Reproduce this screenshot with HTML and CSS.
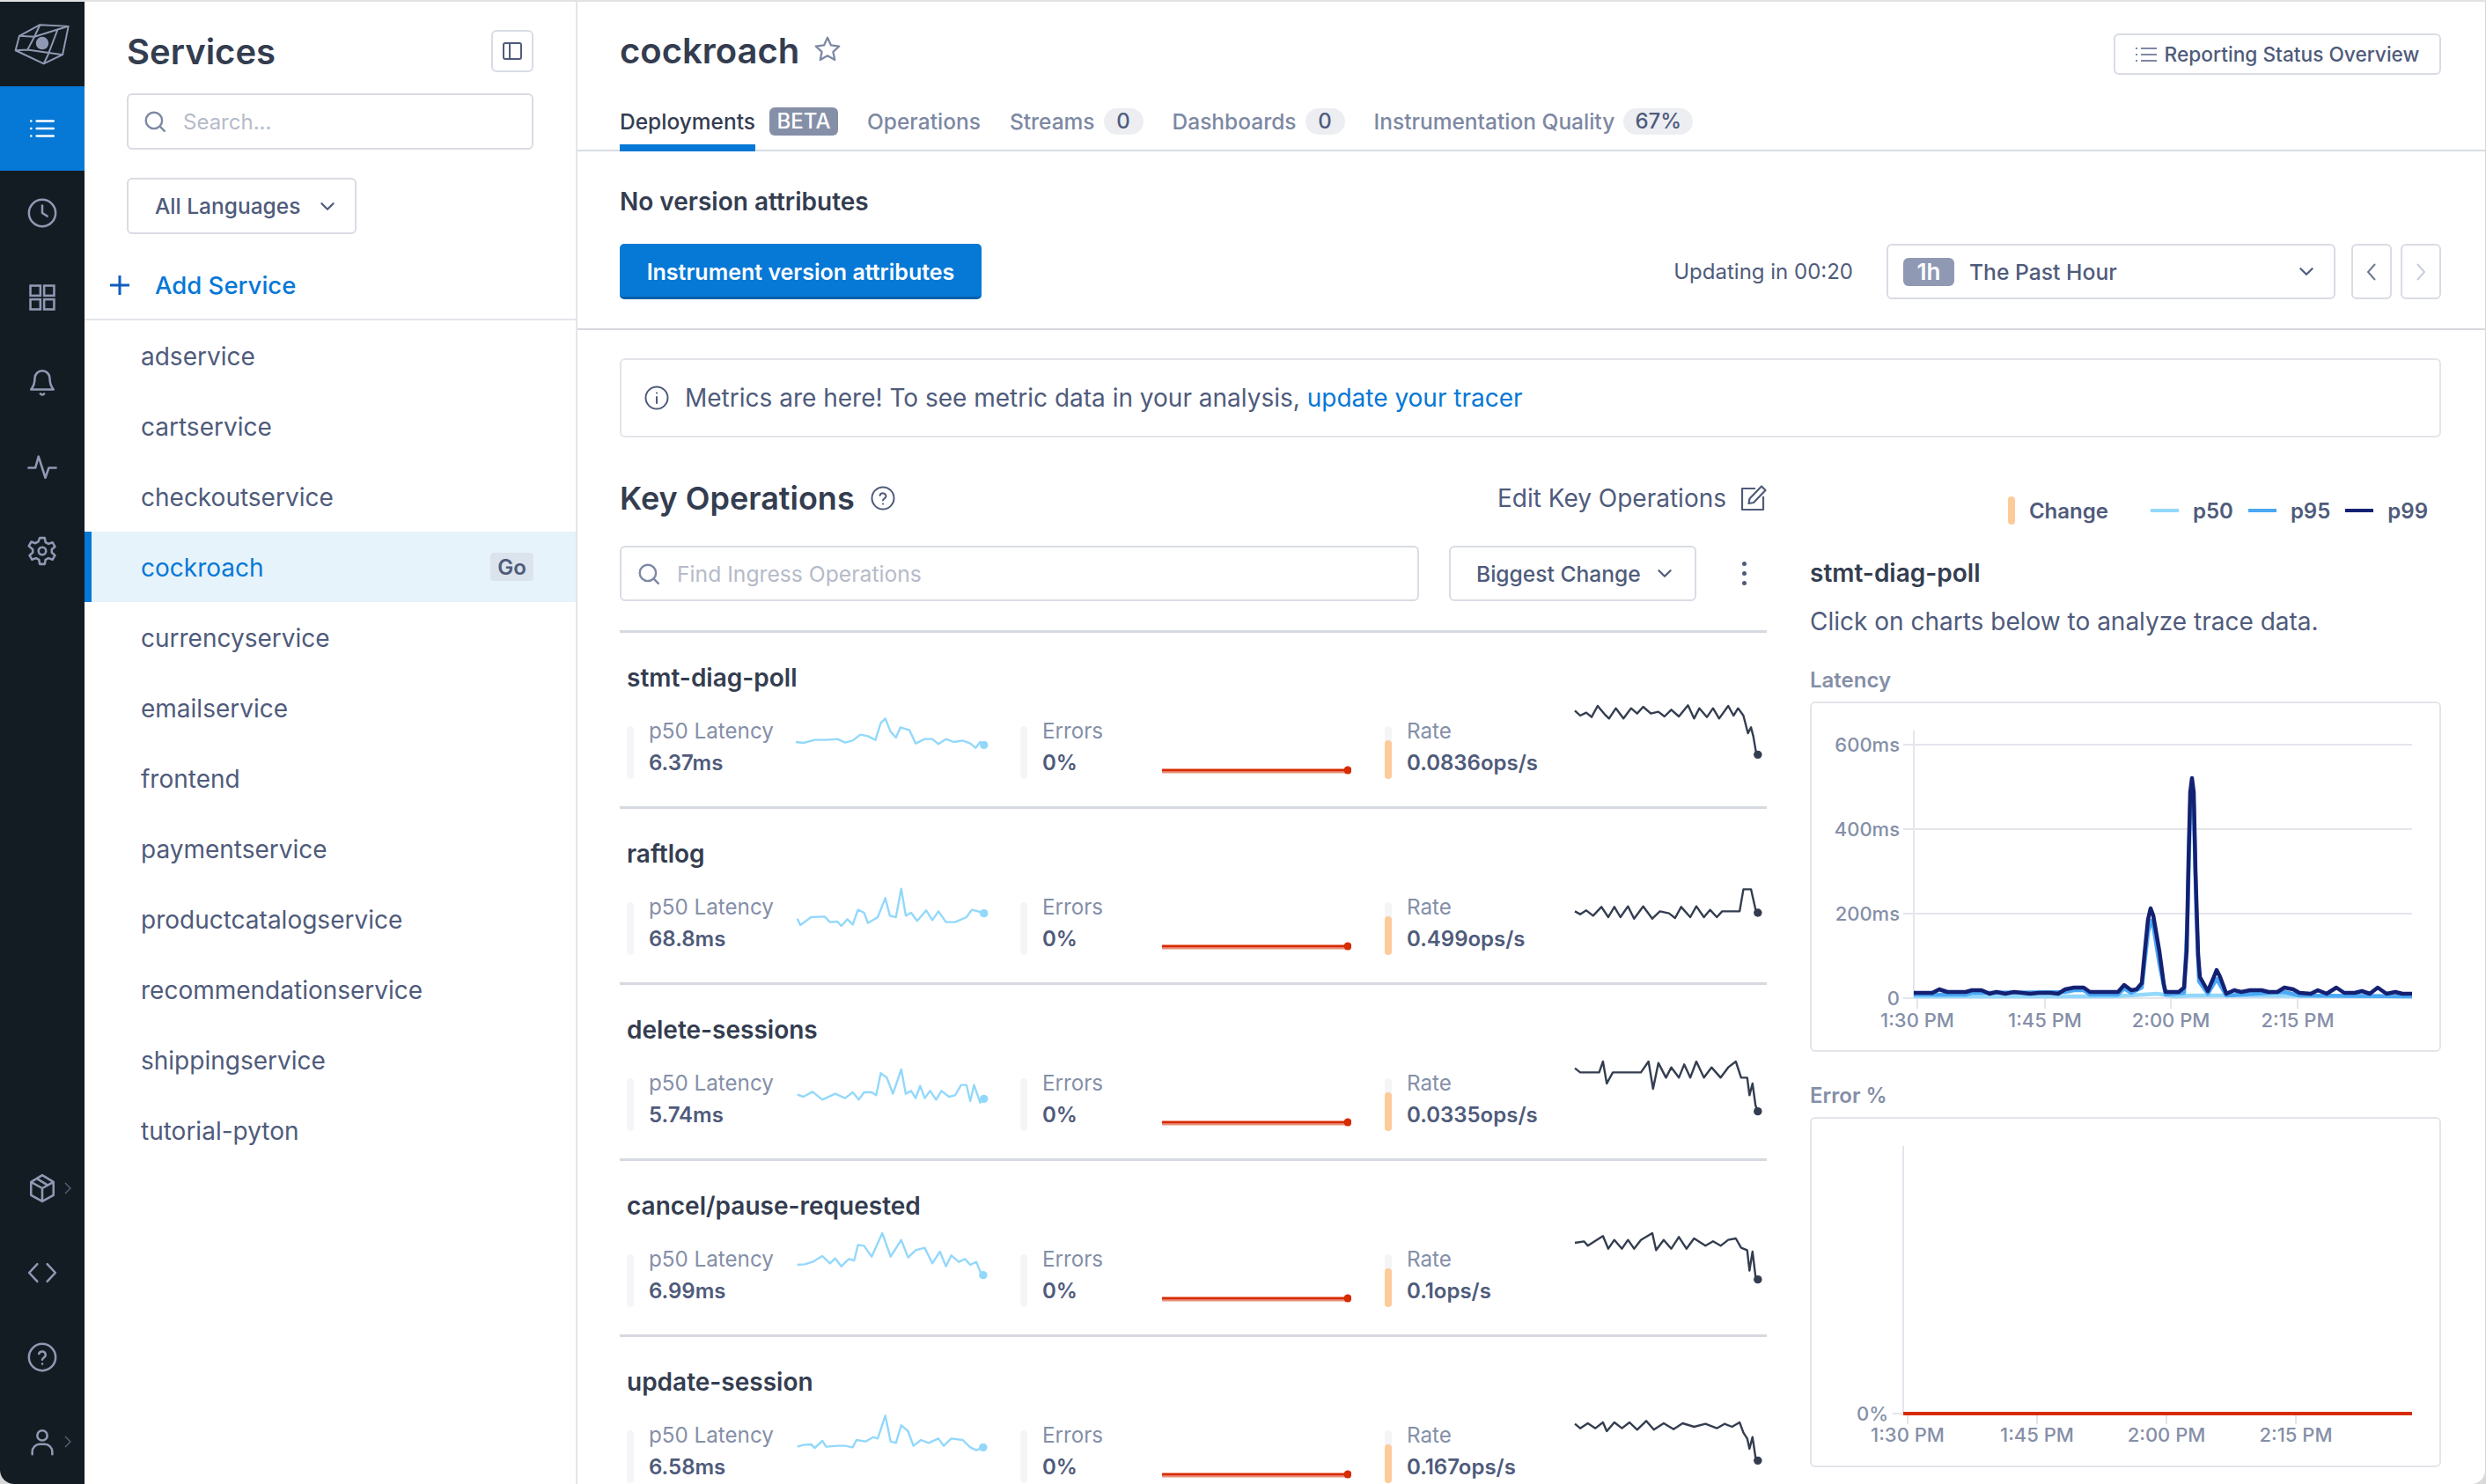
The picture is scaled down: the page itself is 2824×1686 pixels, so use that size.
FILE: index.html
```html
<!DOCTYPE html>
<html lang="en">
<head>
    <meta charset="UTF-8">
    <title>cockroach - Services</title>
    <link rel="stylesheet" href="styles.css">
</head>
<body>
<div class="app">
    <!-- icon rail -->
    <nav class="rail">
        <div class="rail-item">
            <svg class="logo" viewBox="45 75 200 150" fill="none" stroke="#8f99b3" stroke-width="6" stroke-linejoin="round"><path d="M53 172 66 122 137 84 235 89 215 187 150 218Z"/><path d="M66 122 118 125 198 100 235 89M137 84 118 125 94 170 53 172M94 170 215 187M198 100 165 187 150 218"/><circle cx="145" cy="147" r="22" fill="#8f99b3" stroke="none"/></svg>
        </div>
        <div class="rail-item active">
            <svg class="icon" viewBox="0 0 24 24" fill="none" stroke="#fff" stroke-width="1.8" stroke-linecap="round"><path d="M7.500 6H21M7.500 12H21M7.500 18H21M3 6h.1M3 12h.1M3 18h.1"/></svg>
        </div>
        <div class="rail-item">
            <svg class="icon" viewBox="0 0 24 24" fill="none" stroke="#8f99b3" stroke-width="1.8" stroke-linecap="round" stroke-linejoin="round"><circle cx="12" cy="12" r="10.700"/><path d="M12 6v6l4 2.500"/></svg>
        </div>
        <div class="rail-item">
            <svg class="icon" viewBox="0 0 24 24" fill="none" stroke="#8f99b3" stroke-width="1.8"><rect x="2.500" y="2.500" width="8" height="8"/><rect x="13.500" y="2.500" width="8" height="8"/><rect x="2.500" y="13.500" width="8" height="8"/><rect x="13.500" y="13.500" width="8" height="8"/></svg>
        </div>
        <div class="rail-item">
            <svg class="icon" viewBox="0 0 24 24" fill="none" stroke="#8f99b3" stroke-width="1.8" stroke-linecap="round" stroke-linejoin="round"><path d="M18 9A6 6 0 0 0 6 9c0 6.500-3 8.500-3 9h18c0-.5-3-2.500-3-9M10.500 21.500a2 2 0 0 0 3 0"/></svg>
        </div>
        <div class="rail-item">
            <svg class="icon" viewBox="0 0 24 24" fill="none" stroke="#8f99b3" stroke-width="1.8" stroke-linecap="round" stroke-linejoin="round"><path d="M1 13h5.500L9 4l5.500 17 2.800-8H23"/></svg>
        </div>
        <div class="rail-item">
            <svg class="icon" viewBox="0 0 24 24" fill="none" stroke="#8f99b3" stroke-width="1.8" stroke-linejoin="round"><circle cx="12" cy="12" r="3"/><path d="M10 1.500h4l.6 3.500 2.400 1.300 3.200-1.200 2 3.400-2.600 2.200v2.600l2.600 2.200-2 3.400-3.200-1.200-2.400 1.300-.6 3.500h-4l-.6-3.500-2.400-1.300-3.200 1.200-2-3.400 2.600-2.200v-2.600L1.200 8l2-3.400 3.200 1.200L8.800 4.500z"/></svg>
        </div>
        <div class="rail-item rail-spacer">
            <svg class="icon" viewBox="0 0 24 24" fill="none" stroke="#8f99b3" stroke-width="1.8" stroke-linejoin="round"><path d="M12 1.500 21 7v10.500l-9 5-9-5V7zM3 7l9 5 9-5M12 12v10.500M7.500 4.200l9 5.400"/></svg>
            <svg class="more" viewBox="0 0 8 14" fill="none" stroke="#5b6579" stroke-width="1.300"><path d="m1 1 6 6-6 6"/></svg>
        </div>
        <div class="rail-item">
            <svg class="icon" viewBox="0 0 24 24" fill="none" stroke="#8f99b3" stroke-width="1.8" stroke-linecap="round" stroke-linejoin="round"><path d="M8 5 1.500 12 8 19M16 5l6.500 7-6.500 7"/></svg>
        </div>
        <div class="rail-item">
            <svg class="icon" viewBox="0 0 24 24" fill="none" stroke="#8f99b3" stroke-width="1.8" stroke-linecap="round" stroke-linejoin="round"><circle cx="12" cy="12" r="10.700"/><path d="M9.300 9.200a2.800 2.800 0 0 1 5.400 1c0 1.800-2.700 2.300-2.700 3.800M12 17.300h.1"/></svg>
        </div>
        <div class="rail-item">
            <svg class="icon" viewBox="0 0 24 24" fill="none" stroke="#8f99b3" stroke-width="1.8" stroke-linecap="round"><circle cx="12" cy="7" r="4"/><path d="M4 22v-2a6 6 0 0 1 6-6h4a6 6 0 0 1 6 6v2"/></svg>
            <svg class="more" viewBox="0 0 8 14" fill="none" stroke="#5b6579" stroke-width="1.300"><path d="m1 1 6 6-6 6"/></svg>
        </div>
    </nav>

    <!-- services list -->
    <aside class="sidebar">
        <div class="side-head">
            <h2>Services</h2>
            <button class="square-btn">
                <svg width="24" height="24" viewBox="0 0 24 24" fill="none" stroke="#4f5b7b" stroke-width="2"><rect x="2" y="3" width="20" height="18" rx="2"/><path d="M9 3v18"/></svg>
            </button>
        </div>
        <div class="side-search">
            <svg class="search-icon" viewBox="0 0 24 24" fill="none" stroke="#7d88a3" stroke-width="2.200" stroke-linecap="round"><circle cx="11" cy="11" r="8.500"/><path d="m17.500 17.500 4.500 4.500"/></svg>
            <span>Search...</span>
        </div>
        <div class="lang-select">
            <span>All Languages</span>
            <svg class="chevron" viewBox="0 0 16 10" fill="none" stroke="#4f5b7b" stroke-width="2" stroke-linecap="round" stroke-linejoin="round"><path d="m2 2 6 6 6-6"/></svg>
        </div>
        <div class="add-service">
            <svg width="22" height="22" viewBox="0 0 22 22" fill="none" stroke="#0e5cc0" stroke-width="3"><path d="M11 0v22M0 11h22"/></svg>
            <span>Add Service</span>
        </div>
        <ul class="service-list">
            <li>adservice</li>
            <li>cartservice</li>
            <li>checkoutservice</li>
            <li class="selected">cockroach <span class="go">Go</span></li>
            <li>currencyservice</li>
            <li>emailservice</li>
            <li>frontend</li>
            <li>paymentservice</li>
            <li>productcatalogservice</li>
            <li>recommendationservice</li>
            <li>shippingservice</li>
            <li>tutorial-pyton</li>
        </ul>
    </aside>

    <main class="main">
        <header class="main-head">
            <div class="title-row">
                <h1>cockroach</h1>
                <svg class="star" viewBox="0 0 24 24" fill="none" stroke="#7d88a3" stroke-width="1.700" stroke-linejoin="round"><path d="m12 2 3 6.600 7 .8-5.200 4.800L18.200 21 12 17.500 5.800 21l1.400-6.800L2 9.400l7-.8z"/></svg>
                <button class="report-btn">
                    <svg width="24" height="24" viewBox="0 0 24 24" fill="none" stroke="#7d88a3" stroke-width="2"><path d="M6 5h18M6 12h18M6 19h18M0 5h2M0 12h2M0 19h2"/></svg>
                    Reporting Status Overview
                </button>
            </div>
            <div class="tabs">
                <div class="tab current"><span class="tab-label">Deployments</span><span class="beta">BETA</span></div>
                <div class="tab"><span class="tab-label">Operations</span></div>
                <div class="tab"><span class="tab-label">Streams</span><span class="pill">0</span></div>
                <div class="tab"><span class="tab-label">Dashboards</span><span class="pill">0</span></div>
                <div class="tab"><span class="tab-label">Instrumentation Quality</span><span class="pill wide">67%</span></div>
            </div>
        </header>

        <section class="version-band">
            <div class="version-title">No version attributes</div>
            <div class="version-row">
                <button class="primary-btn">Instrument version attributes</button>
                <span class="updating">Updating in 00:20</span>
                <div class="range-select">
                    <span class="range-badge">1h</span>
                    <span class="range-text">The Past Hour</span>
                    <svg class="chevron" viewBox="0 0 16 10" fill="none" stroke="#4f5b7b" stroke-width="2" stroke-linecap="round" stroke-linejoin="round"><path d="m2 2 6 6 6-6"/></svg>
                </div>
                <button class="page-btn"><svg width="12" height="22" viewBox="0 0 12 22" fill="none" stroke="#6d7895" stroke-width="2"><path d="M10 2 2 11l8 9"/></svg></button>
                <button class="page-btn next"><svg width="12" height="22" viewBox="0 0 12 22" fill="none" stroke="#c8cdd9" stroke-width="2"><path d="m2 2 8 9-8 9"/></svg></button>
            </div>
        </section>

        <div class="alert">
            <svg width="28" height="28" viewBox="0 0 28 28" fill="none" stroke="#4f5b7b" stroke-width="2" stroke-linecap="round"><circle cx="14" cy="14" r="12.500"/><path d="M14 13v7M14 8.500h.1"/></svg>
            <span>Metrics are here! To see metric data in your analysis, <a>update your tracer</a></span>
        </div>

        <div class="columns">
            <section class="ops">
                <div class="ops-head">
                    <h3>Key Operations</h3>
                    <svg width="28" height="28" viewBox="0 0 28 28" fill="none" stroke="#4f5b7b" stroke-width="2" stroke-linecap="round"><circle cx="14" cy="14" r="12.500"/><path d="M10.500 10.800a3.600 3.600 0 0 1 7 1c0 2.300-3.500 2.700-3.500 4.700M14 20.500h.1"/></svg>
                    <span class="edit-link">Edit Key Operations</span>
                    <svg width="30" height="30" viewBox="0 0 30 30" fill="none" stroke="#4f5b7b" stroke-width="2.200" stroke-linejoin="round"><path d="M17 4H2v24h24V13"/><path d="M24 1.500 28.500 6 15 20l-5.500 1 1-5.500z"/></svg>
                </div>
                <div class="ops-tools">
                    <div class="ops-search">
                        <svg class="search-icon" viewBox="0 0 24 24" fill="none" stroke="#7d88a3" stroke-width="2.200" stroke-linecap="round"><circle cx="11" cy="11" r="8.500"/><path d="m17.500 17.500 4.500 4.500"/></svg>
                        <span>Find Ingress Operations</span>
                    </div>
                    <div class="sort-select">
                        <span>Biggest Change</span>
                        <svg class="chevron" viewBox="0 0 16 10" fill="none" stroke="#4f5b7b" stroke-width="2" stroke-linecap="round" stroke-linejoin="round"><path d="m2 2 6 6 6-6"/></svg>
                    </div>
                    <div class="kebab"><i></i><i></i><i></i></div>
                </div>

                <article class="op-row">
                    <div class="op-name">stmt-diag-poll</div>
                    <div class="metrics">
                        <div class="metric latency">
                            <div class="bar"></div>
                            <div class="metric-text"><div class="label">p50 Latency</div><div class="value">6.37ms</div></div>
                            <svg class="spark spark-lat" viewBox="260 911 253 180" preserveAspectRatio="none"><polyline points="260,965 270,968 285,958 300,958 315,955 325,967 335,960 345,940 355,945 365,958 372,900 378,885 385,930 392,950 398,915 410,925 418,970 430,955 440,955 448,972 458,955 468,965 480,960 490,970 497,985 503,965 508,975"/><ellipse cx="508" cy="975" rx="5.500" ry="14"/></svg>
                        </div>
                        <div class="metric errors">
                            <div class="bar"></div>
                            <div class="metric-text"><div class="label">Errors</div><div class="value">0%</div></div>
                            <svg class="spark-err" viewBox="0 0 215 60"><path class="under" d="M0 52.500h208"/><path class="line" d="M0 50h211"/><circle cx="211" cy="50" r="4.500"/></svg>
                        </div>
                        <div class="metric rate">
                            <div class="bar"><div class="bar-change"></div></div>
                            <div class="metric-text"><div class="label">Rate</div><div class="value">0.0836ops/s</div></div>
                            <svg class="spark spark-rate" viewBox="1288 911 247 180" preserveAspectRatio="none"><polyline points="1288,858 1295,875 1303,865 1310,880 1318,842 1327,870 1333,885 1342,850 1352,885 1362,850 1370,868 1378,845 1388,868 1398,862 1406,878 1415,855 1425,878 1437,840 1445,885 1452,850 1462,880 1470,850 1478,885 1490,842 1497,875 1503,850 1510,875 1516,935 1520,915 1523,945 1527,1005"/><ellipse cx="1529" cy="1008" rx="5.500" ry="14"/></svg>
                        </div>
                    </div>
                </article>

                <article class="op-row">
                    <div class="op-name">raftlog</div>
                    <div class="metrics">
                        <div class="metric latency">
                            <div class="bar"></div>
                            <div class="metric-text"><div class="label">p50 Latency</div><div class="value">68.8ms</div></div>
                            <svg class="spark spark-lat" viewBox="260 284 253 180" preserveAspectRatio="none"><polyline points="262,340 266,362 275,345 280,335 298,333 305,352 315,350 320,365 328,342 335,360 342,310 350,320 355,355 368,335 378,270 384,330 392,335 399,238 405,330 412,320 420,348 432,312 440,345 448,315 458,352 470,352 485,335 492,310 500,315 508,322"/><ellipse cx="508" cy="322" rx="5.500" ry="14"/></svg>
                        </div>
                        <div class="metric errors">
                            <div class="bar"></div>
                            <div class="metric-text"><div class="label">Errors</div><div class="value">0%</div></div>
                            <svg class="spark-err" viewBox="0 0 215 60"><path class="under" d="M0 52.500h208"/><path class="line" d="M0 50h211"/><circle cx="211" cy="50" r="4.500"/></svg>
                        </div>
                        <div class="metric rate">
                            <div class="bar"><div class="bar-change"></div></div>
                            <div class="metric-text"><div class="label">Rate</div><div class="value">0.499ops/s</div></div>
                            <svg class="spark spark-rate" viewBox="1288 284 247 180" preserveAspectRatio="none"><polyline points="1288,315 1295,325 1303,312 1312,330 1323,300 1332,335 1340,300 1348,335 1358,298 1366,340 1378,298 1390,340 1400,315 1412,322 1420,338 1428,300 1440,335 1448,298 1458,335 1466,310 1475,335 1482,315 1505,315 1510,240 1520,240 1527,320"/><ellipse cx="1529" cy="320" rx="5.500" ry="14"/></svg>
                        </div>
                    </div>
                </article>

                <article class="op-row">
                    <div class="op-name">delete-sessions</div>
                    <div class="metrics">
                        <div class="metric latency">
                            <div class="bar"></div>
                            <div class="metric-text"><div class="label">p50 Latency</div><div class="value">5.74ms</div></div>
                            <svg class="spark spark-lat" viewBox="260 882 253 180" preserveAspectRatio="none"><polyline points="262,938 270,945 282,928 295,955 312,935 325,950 335,930 343,955 350,930 360,930 366,940 372,865 380,880 388,935 399,852 405,935 412,925 418,950 424,908 430,950 437,925 445,955 452,925 462,945 470,940 478,905 485,905 490,960 495,905 503,965 508,952"/><ellipse cx="508" cy="952" rx="5.500" ry="14"/></svg>
                        </div>
                        <div class="metric errors">
                            <div class="bar"></div>
                            <div class="metric-text"><div class="label">Errors</div><div class="value">0%</div></div>
                            <svg class="spark-err" viewBox="0 0 215 60"><path class="under" d="M0 52.500h208"/><path class="line" d="M0 50h211"/><circle cx="211" cy="50" r="4.500"/></svg>
                        </div>
                        <div class="metric rate">
                            <div class="bar"><div class="bar-change"></div></div>
                            <div class="metric-text"><div class="label">Rate</div><div class="value">0.0335ops/s</div></div>
                            <svg class="spark spark-rate" viewBox="1288 882 247 180" preserveAspectRatio="none"><polyline points="1288,848 1295,862 1320,862 1325,825 1330,900 1338,862 1375,862 1385,825 1391,918 1398,830 1408,880 1415,845 1425,880 1432,835 1440,880 1448,825 1458,880 1468,845 1480,880 1490,845 1500,825 1507,880 1515,880 1518,940 1522,900 1526,975 1529,995"/><ellipse cx="1529" cy="995" rx="5.500" ry="14"/></svg>
                        </div>
                    </div>
                </article>

                <article class="op-row">
                    <div class="op-name">cancel/pause-requested</div>
                    <div class="metrics">
                        <div class="metric latency">
                            <div class="bar"></div>
                            <div class="metric-text"><div class="label">p50 Latency</div><div class="value">6.99ms</div></div>
                            <svg class="spark spark-lat" viewBox="260 254 253 180" preserveAspectRatio="none"><polyline points="262,290 272,288 282,280 295,260 305,285 312,268 320,295 330,270 337,275 342,222 350,225 360,262 374,182 385,262 399,205 408,265 418,240 430,232 440,285 450,245 458,295 465,258 475,280 483,270 490,290 498,280 505,325"/><ellipse cx="507" cy="325" rx="5.500" ry="14"/></svg>
                        </div>
                        <div class="metric errors">
                            <div class="bar"></div>
                            <div class="metric-text"><div class="label">Errors</div><div class="value">0%</div></div>
                            <svg class="spark-err" viewBox="0 0 215 60"><path class="under" d="M0 52.500h208"/><path class="line" d="M0 50h211"/><circle cx="211" cy="50" r="4.500"/></svg>
                        </div>
                        <div class="metric rate">
                            <div class="bar"><div class="bar-change"></div></div>
                            <div class="metric-text"><div class="label">Rate</div><div class="value">0.1ops/s</div></div>
                            <svg class="spark spark-rate" viewBox="1288 254 247 180" preserveAspectRatio="none"><polyline points="1288,215 1300,210 1305,225 1325,192 1332,235 1340,205 1350,235 1358,205 1366,235 1375,205 1390,182 1395,240 1405,205 1415,235 1425,195 1435,235 1445,200 1460,225 1470,210 1480,225 1490,205 1500,200 1507,232 1515,240 1518,310 1522,245 1526,330 1529,340"/><ellipse cx="1529" cy="340" rx="5.500" ry="14"/></svg>
                        </div>
                    </div>
                </article>

                <article class="op-row">
                    <div class="op-name">update-session</div>
                    <div class="metrics">
                        <div class="metric latency">
                            <div class="bar"></div>
                            <div class="metric-text"><div class="label">p50 Latency</div><div class="value">6.58ms</div></div>
                            <svg class="spark spark-lat" viewBox="260 852 253 180" preserveAspectRatio="none"><polyline points="262,908 270,902 280,900 285,912 295,888 300,908 315,905 325,905 335,910 340,885 352,890 362,875 368,880 378,802 385,890 392,895 399,835 408,855 415,905 425,885 435,895 448,880 455,905 465,880 480,885 490,910 498,920 507,910"/><ellipse cx="507" cy="910" rx="5.500" ry="14"/></svg>
                        </div>
                        <div class="metric errors">
                            <div class="bar"></div>
                            <div class="metric-text"><div class="label">Errors</div><div class="value">0%</div></div>
                            <svg class="spark-err" viewBox="0 0 215 60"><path class="under" d="M0 52.500h208"/><path class="line" d="M0 50h211"/><circle cx="211" cy="50" r="4.500"/></svg>
                        </div>
                        <div class="metric rate">
                            <div class="bar"><div class="bar-change"></div></div>
                            <div class="metric-text"><div class="label">Rate</div><div class="value">0.167ops/s</div></div>
                            <svg class="spark spark-rate" viewBox="1288 852 247 180" preserveAspectRatio="none"><polyline points="1288,830 1295,845 1305,828 1315,845 1325,825 1330,855 1340,825 1350,845 1360,825 1370,850 1382,820 1392,850 1405,828 1418,848 1430,828 1445,840 1460,830 1475,845 1485,830 1495,840 1505,825 1510,860 1515,880 1518,915 1522,875 1526,945 1529,955"/><ellipse cx="1529" cy="955" rx="5.500" ry="14"/></svg>
                        </div>
                    </div>
                </article>
            </section>

            <section class="detail">
                <div class="legend">
                    <span class="legend-change"></span><span class="legend-text change-text">Change</span>
                    <span class="legend-line p50"></span><span class="legend-text">p50</span>
                    <span class="legend-line p95"></span><span class="legend-text">p95</span>
                    <span class="legend-line p99"></span><span class="legend-text">p99</span>
                </div>
                <div class="detail-name">stmt-diag-poll</div>
                <div class="detail-hint">Click on charts below to analyze trace data.</div>

                <div class="chart-title">Latency</div>
                <div class="chart-box">
                    <svg class="chart" viewBox="2058 799 713 394">
                        <g class="grid">
                            <path d="M2162 846H2740M2162 942H2740M2162 1038H2740M2162 1134H2740"/>
                            <path d="M2174 830V1134M2178 1134v12M2323 1134v12M2466 1134v12M2610 1134v12"/>
                        </g>
                        <g class="axis">
                            <text x="2158" y="854" text-anchor="end">600ms</text>
                            <text x="2158" y="950" text-anchor="end">400ms</text>
                            <text x="2158" y="1046" text-anchor="end">200ms</text>
                            <text x="2158" y="1142" text-anchor="end">0</text>
                            <text x="2178" y="1167" text-anchor="middle">1:30 PM</text>
                            <text x="2323" y="1167" text-anchor="middle">1:45 PM</text>
                            <text x="2466" y="1167" text-anchor="middle">2:00 PM</text>
                            <text x="2610" y="1167" text-anchor="middle">2:15 PM</text>
                        </g>
                        <polyline class="l50" points="2174,1132 2300,1132 2400,1132 2435,1130 2450,1129 2470,1132 2490,1131 2530,1131 2740,1132"/>
                        <polyline class="l95" points="2174,1130 2233,1130 2240,1128 2251,1128 2346,1127 2356,1125 2367,1125 2374,1130 2406,1130 2413,1123 2421,1128 2433,1122 2440,1060 2443,1046 2446,1052 2453,1095 2460,1130 2481,1128 2485,1040 2488,915 2490,900 2492,915 2495,1040 2498,1115 2508,1129 2518,1112 2529,1131 2595,1127 2612,1131 2740,1132"/>
                        <polyline class="l99" points="2174,1128 2195,1128 2203,1124 2212,1127 2233,1127 2240,1125 2251,1125 2260,1129 2268,1127 2278,1129 2288,1127 2306,1129 2316,1128 2329,1128 2338,1129 2346,1124 2356,1122 2367,1122 2374,1127 2406,1127 2413,1119 2421,1125 2427,1124 2433,1117 2436,1085 2440,1045 2443,1032 2446,1040 2453,1081 2458,1118 2460,1127 2475,1127 2481,1122 2484,1080 2486,980 2488,900 2490,884 2492,900 2494,990 2497,1085 2499,1110 2508,1126 2514,1112 2518,1102 2522,1110 2529,1129 2538,1125 2546,1127 2556,1125 2569,1125 2577,1127 2587,1127 2595,1122 2605,1124 2612,1128 2625,1129 2633,1125 2643,1129 2654,1122 2663,1128 2675,1128 2683,1126 2692,1129 2701,1122 2711,1129 2721,1127 2729,1129 2740,1129"/>
                    </svg>
                </div>

                <div class="chart-title second">Error %</div>
                <div class="chart-box">
                    <svg class="chart" viewBox="2058 1271 713 394">
                        <g class="grid">
                            <path d="M2162 1302V1606M2150 1606H2162M2167 1606v12M2314 1606v12M2461 1606v12M2608 1606v12"/>
                        </g>
                        <g class="axis">
                            <text x="2145" y="1614" text-anchor="end">0%</text>
                            <text x="2167" y="1638" text-anchor="middle">1:30 PM</text>
                            <text x="2314" y="1638" text-anchor="middle">1:45 PM</text>
                            <text x="2461" y="1638" text-anchor="middle">2:00 PM</text>
                            <text x="2608" y="1638" text-anchor="middle">2:15 PM</text>
                        </g>
                        <path class="err-line" d="M2162 1606H2740"/>
                    </svg>
                </div>
            </section>
        </div>
    </main>
</div>
</body>
</html>
```

FILE: styles.css
```css
:root {
    --dark: #343d50;
    --mid: #4f5b7b;
    --muted: #858fa8;
    --placeholder: #b5bbc9;
    --border: #d9dce4;
    --blue: #0678d6;
    --rail: #141c23;
}

html, body {
    margin: 0;
    padding: 0;
    height: 1686px;
    overflow: hidden;
    background: #d9d9d9;
    font-family: 'Inter', 'Liberation Sans', sans-serif;
    color: var(--mid);
}
.app {
    display: flex;
    box-sizing: border-box;
    height: 1686px;
    border-top: 2px solid #e2e2e2;
    border-right: 1px solid #d5d7dc;
    border-radius: 0 0 16px 16px;
    overflow: hidden;
    background: #fff;
}
button {
    font-family: inherit;
    cursor: pointer;
}

/* icon rail */
.rail {
    width: 96px;
    flex: none;
    display: flex;
    flex-direction: column;
    background: var(--rail);
}
.rail-item {
    height: 96px;
    flex: none;
    display: flex;
    align-items: center;
    justify-content: center;
    position: relative;
}
.rail-item.active {
    background: var(--blue);
}
.rail-spacer {
    margin-top: auto;
}
.logo {
    width: 66px;
    height: 50px;
}
.icon {
    width: 34px;
    height: 34px;
}
.more {
    position: absolute;
    left: 73px;
    top: 41px;
    width: 8px;
    height: 14px;
}

/* services list */
.sidebar {
    width: 560px;
    flex: none;
    box-sizing: border-box;
    border-right: 2px solid #e3e5ea;
    display: flex;
    flex-direction: column;
}
.side-head {
    display: flex;
    align-items: center;
    justify-content: space-between;
    height: 48px;
    padding: 32px 48px 0 48px;
}
.side-head h2 {
    margin: 0;
    font-size: 40px;
    font-weight: 600;
    color: var(--dark);
}
.square-btn {
    width: 48px;
    height: 48px;
    padding: 0;
    display: flex;
    align-items: center;
    justify-content: center;
    background: #fff;
    border: 2px solid var(--border);
    border-radius: 6px;
}
.side-search {
    margin: 24px 48px 0 48px;
    height: 64px;
    box-sizing: border-box;
    border: 2px solid var(--border);
    border-radius: 6px;
    display: flex;
    align-items: center;
    padding-left: 17px;
    font-size: 24px;
    color: var(--placeholder);
}
.search-icon {
    width: 26px;
    height: 26px;
    margin-right: 19px;
    flex: none;
}
.lang-select {
    margin: 32px 0 0 48px;
    width: 261px;
    height: 64px;
    box-sizing: border-box;
    border: 2px solid var(--border);
    border-radius: 6px;
    display: flex;
    align-items: center;
    padding-left: 30px;
    font-size: 24.5px;
    font-weight: 500;
}
.lang-select .chevron {
    margin-left: 22px;
}
.chevron {
    width: 18px;
    height: 11px;
    flex: none;
}
.add-service {
    height: 98px;
    box-sizing: border-box;
    padding: 19px 0 0 29px;
    border-bottom: 2px solid #e3e5ea;
    display: flex;
    align-items: center;
    font-size: 27.5px;
    font-weight: 500;
    color: var(--blue);
}
.add-service span {
    margin-left: 29px;
}
.service-list {
    list-style: none;
    margin: 0;
    padding: 0;
}
.service-list li {
    height: 80px;
    box-sizing: border-box;
    padding: 2px 48px 0 64px;
    display: flex;
    align-items: center;
    justify-content: space-between;
    font-size: 28px;
}
.service-list li.selected {
    background: #e6f3fa;
    color: var(--blue);
    border-left: 8px solid var(--blue);
    padding-left: 56px;
}
.go {
    width: 49px;
    height: 32px;
    margin-top: -2px;
    border-radius: 4px;
    background: #dbe3ec;
    color: var(--mid);
    font-size: 24px;
    font-weight: 600;
    display: flex;
    align-items: center;
    justify-content: center;
}

/* main panel */
.main {
    flex: 1;
    min-width: 0;
}
.main-head {
    box-sizing: border-box;
    height: 170px;
    border-bottom: 2px solid var(--border);
    padding: 0 50px 0 48px;
}
.title-row {
    height: 112px;
    display: flex;
    box-sizing: border-box;
    padding-top: 32px;
}
.title-row h1 {
    margin: 0;
    font-size: 40px;
    line-height: 48px;
    font-weight: 600;
    color: var(--dark);
}
.star {
    width: 32px;
    height: 32px;
    margin: 6px 0 0 16px;
}
.report-btn {
    margin: 4px 0 0 auto;
    width: 372px;
    height: 47px;
    box-sizing: border-box;
    background: #fff;
    border: 2px solid var(--border);
    border-radius: 6px;
    display: flex;
    align-items: center;
    justify-content: center;
    gap: 9px;
    font-size: 22.7px;
    font-weight: 500;
    color: var(--mid);
}
.tabs {
    display: flex;
    gap: 33px;
    height: 56px;
    box-sizing: border-box;
    padding-bottom: 8px;
}
.tab {
    display: flex;
    align-items: center;
    gap: 10px;
    font-size: 24.5px;
    line-height: 30px;
    font-weight: 500;
    color: #7d88a3;
}
.tab.current {
    color: var(--dark);
    gap: 16px;
}
.tab-label {
    position: relative;
}
.tab.current .tab-label::after {
    content: '';
    position: absolute;
    left: 0;
    right: 0;
    bottom: -19px;
    height: 8px;
    background: var(--blue);
}
.beta {
    width: 78px;
    height: 32px;
    border-radius: 6px;
    background: #858fa8;
    color: #fff;
    font-size: 24px;
    font-weight: 500;
    display: flex;
    align-items: center;
    justify-content: center;
}
.pill {
    width: 45px;
    height: 30px;
    border-radius: 15px;
    background: #eceef2;
    color: var(--mid);
    font-size: 24px;
    display: flex;
    align-items: center;
    justify-content: center;
}
.pill.wide {
    width: 79px;
}

.version-band {
    box-sizing: border-box;
    height: 203px;
    border-bottom: 2px solid #d6d9de;
    padding: 40px 50px 0 48px;
}
.version-title {
    font-size: 28px;
    line-height: 34px;
    font-weight: 600;
    color: var(--dark);
}
.version-row {
    display: flex;
    align-items: center;
    margin-top: 31px;
    height: 63px;
}
.primary-btn {
    width: 411px;
    height: 63px;
    padding: 3px 0 0;
    background: var(--blue);
    border: none;
    border-bottom: 3px solid #055fab;
    border-radius: 5px;
    color: #fff;
    font-size: 25px;
    font-weight: 600;
}
.updating {
    margin-left: auto;
    font-size: 24px;
    color: var(--mid);
}
.range-select {
    width: 510px;
    height: 63px;
    margin-left: 38px;
    box-sizing: border-box;
    border: 2px solid var(--border);
    border-radius: 6px;
    display: flex;
    align-items: center;
    padding: 0 22px 0 17px;
}
.range-badge {
    width: 58px;
    height: 32px;
    border-radius: 6px;
    background: #8f99b3;
    color: #fff;
    font-size: 26px;
    font-weight: 600;
    display: flex;
    align-items: center;
    justify-content: center;
}
.range-text {
    margin-left: 17px;
    font-size: 24.7px;
    font-weight: 500;
    flex: 1;
}
.page-btn {
    width: 46px;
    height: 63px;
    margin-left: 18px;
    padding: 0;
    background: #fff;
    border: 2px solid var(--border);
    border-radius: 6px;
    display: flex;
    align-items: center;
    justify-content: center;
}
.page-btn.next {
    margin-left: 10px;
}

.alert {
    margin: 32px 50px 0 48px;
    height: 90px;
    box-sizing: border-box;
    border: 2px solid #e3e5ea;
    border-radius: 6px;
    display: flex;
    align-items: center;
    gap: 18px;
    padding-left: 26px;
    font-size: 28px;
}
.alert a {
    color: var(--blue);
}

.columns {
    display: flex;
    gap: 49px;
    padding: 0 50px 0 48px;
}

/* key operations */
.ops {
    width: 1303px;
    flex: none;
}
.ops-head {
    height: 80px;
    margin-top: 29px;
    display: flex;
    align-items: center;
}
.ops-head h3 {
    margin: 0 18px 0 0;
    font-size: 36px;
    font-weight: 600;
    color: var(--dark);
}
.edit-link {
    margin: 0 16px 0 auto;
    font-size: 28px;
}
.ops-tools {
    display: flex;
    margin-top: 14px;
    height: 63px;
    margin-bottom: 33px;
}
.ops-search {
    width: 908px;
    box-sizing: border-box;
    border: 2px solid var(--border);
    border-radius: 6px;
    display: flex;
    align-items: center;
    padding-left: 18px;
    font-size: 24.7px;
    color: var(--placeholder);
}
.sort-select {
    width: 281px;
    margin-left: 34px;
    box-sizing: border-box;
    border: 2px solid var(--border);
    border-radius: 6px;
    display: flex;
    align-items: center;
    padding-left: 29px;
    gap: 18px;
    font-size: 24.6px;
    font-weight: 500;
}
.kebab {
    display: flex;
    flex-direction: column;
    justify-content: center;
    gap: 6px;
    margin-left: 52px;
}
.kebab i {
    display: block;
    width: 5px;
    height: 5px;
    border-radius: 50%;
    background: var(--mid);
}
.op-row {
    height: 200px;
    box-sizing: border-box;
    border-top: 3px solid #d6d9e0;
    padding: 34px 0 0 8px;
}
.op-name {
    font-size: 28px;
    line-height: 34px;
    font-weight: 600;
    color: var(--dark);
}
.metrics {
    display: flex;
    margin-top: 38px;
}
.metric {
    display: flex;
    height: 60px;
    flex: none;
    position: relative;
}
.metric.latency {
    width: 447px;
}
.metric.errors {
    width: 414px;
}
.metric.rate {
    width: 434px;
}
.bar {
    width: 8px;
    height: 60px;
    flex: none;
    border-radius: 4px;
    background: #f4f5f7;
    display: flex;
    align-items: flex-end;
}
.bar-change {
    width: 8px;
    height: 44px;
    border-radius: 4px;
    background: #fdcb9a;
}
.metric-text {
    margin: -12px 0 0 17px;
}
.label {
    font-size: 24.2px;
    line-height: 36px;
    color: var(--muted);
}
.value {
    font-size: 24px;
    line-height: 36px;
    font-weight: 600;
    color: var(--mid);
}
.spark {
    height: 60px;
    overflow: visible;
    margin-left: auto;
    flex: none;
}
.spark polyline {
    fill: none;
    stroke-width: 2.4;
    stroke-linejoin: round;
    vector-effect: non-scaling-stroke;
}
.spark-lat {
    width: 218px;
    margin-right: 37px;
}
.spark-lat polyline {
    stroke: #93d8fb;
}
.spark-lat ellipse {
    fill: #93d8fb;
}
.spark-rate {
    width: 213px;
    margin-right: 5px;
}
.spark-rate polyline {
    stroke: var(--dark);
}
.spark-rate ellipse {
    fill: var(--dark);
}
.spark-err {
    width: 215px;
    height: 60px;
    margin-left: auto;
    margin-right: 38px;
    flex: none;
}
.spark-err .line {
    stroke: #d72b00;
    stroke-width: 3;
}
.spark-err .under {
    stroke: #e8907a;
    stroke-width: 2;
}
.spark-err circle {
    fill: #d72b00;
}

/* right hand detail */
.detail {
    width: 717px;
    flex: none;
}
.legend {
    display: flex;
    align-items: center;
    justify-content: flex-end;
    height: 32px;
    margin-top: 67px;
    padding-right: 15px;
}
.legend-change {
    width: 8px;
    height: 32px;
    border-radius: 4px;
    background: #fdcb9a;
    margin-right: 16px;
}
.legend-text {
    font-size: 24px;
    font-weight: 600;
    margin-left: 16px;
    margin-right: 17px;
}
.legend-text:last-child {
    margin-right: 0;
}
.legend-change + .legend-text {
    margin-left: 0;
    margin-right: 48px;
}
.legend-line {
    width: 32px;
    height: 4px;
}
.legend-line.p50 {
    background: #93d8fb;
}
.legend-line.p95 {
    background: #4aa8f5;
}
.legend-line.p99 {
    background: #142172;
}
.detail-name {
    margin-top: 38px;
    font-size: 28px;
    line-height: 34px;
    font-weight: 600;
    color: var(--dark);
}
.detail-hint {
    margin-top: 21px;
    font-size: 28px;
    line-height: 34px;
}
.chart-title {
    margin-top: 33px;
    font-size: 24px;
    line-height: 34px;
    font-weight: 600;
    color: var(--muted);
}
.chart-title.second {
    margin-top: 32px;
    line-height: 35px;
}
.chart-box {
    margin-top: 7px;
    height: 398px;
    box-sizing: border-box;
    border: 2px solid #e3e5ea;
    border-radius: 6px;
}
.chart {
    display: block;
    width: 713px;
    height: 394px;
}
.grid path {
    fill: none;
    stroke: #e4e6ec;
    stroke-width: 2;
}
.axis text {
    font-size: 22px;
    font-weight: 500;
    fill: var(--muted);
}
.chart polyline {
    fill: none;
    stroke-width: 4.5;
    stroke-linejoin: round;
}
.l50 {
    stroke: #93d8fb;
}
.l95 {
    stroke: #4aa8f5;
}
.l99 {
    stroke: #142172;
}
.err-line {
    stroke: #d72b00;
    stroke-width: 4;
}
```
